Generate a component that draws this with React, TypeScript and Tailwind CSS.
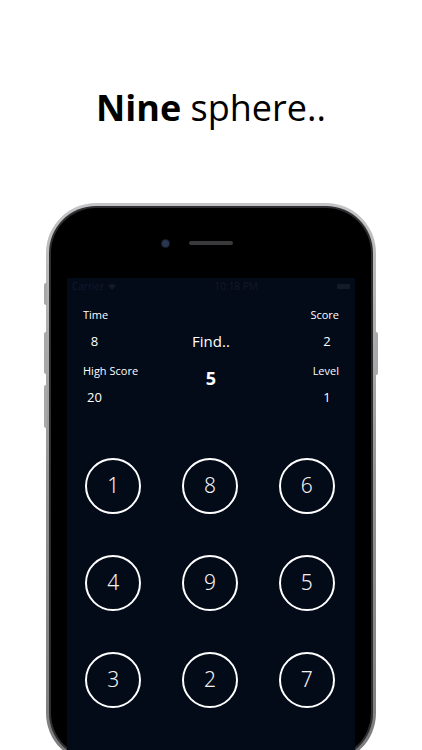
import React from "react";

const numbers = [1, 8, 6, 4, 9, 5, 3, 2, 7];

function StatusBar() {
  return (
    <div className="flex h-[16px] items-center justify-between px-[5px] text-[10px] leading-none text-[#131a29]">
      <div className="flex items-center gap-[3px]">
        <span>Carrier</span>
        <svg width="10" height="8" viewBox="0 0 10 8" fill="#131a29">
          <path d="M5 8 L1 3.5 A6 6 0 0 1 9 3.5 Z" />
        </svg>
      </div>
      <span className="ml-[18px]">10:18 PM</span>
      <div className="h-[5px] w-[13px] rounded-[1px] bg-[#131a29]" />
    </div>
  );
}

function Stats() {
  return (
    <div className="mt-[14px] grid grid-cols-[1fr_auto_1fr] px-[16px] text-white">
      <div className="flex flex-col items-start">
        <div className="text-[11px] leading-[14px]">Time</div>
        <div className="mt-[10px] w-[23px] text-center text-[13px] leading-[18px]">8</div>
        <div className="mt-[14px] text-[11px] leading-[14px]">High Score</div>
        <div className="mt-[10px] w-[23px] text-center text-[13px] leading-[18px]">20</div>
      </div>
      <div className="flex flex-col items-center pt-[23px]">
        <div className="text-[15px] leading-[20px]">Find..</div>
        <div className="mt-[16px] text-[18px] font-bold leading-[22px]">5</div>
      </div>
      <div className="flex flex-col items-end">
        <div className="text-[11px] leading-[14px]">Score</div>
        <div className="mt-[10px] w-[24px] text-center text-[13px] leading-[18px]">2</div>
        <div className="mt-[14px] text-[11px] leading-[14px]">Level</div>
        <div className="mt-[10px] w-[24px] text-center text-[13px] leading-[18px]">1</div>
      </div>
    </div>
  );
}

function Spheres() {
  return (
    <div className="mt-[52px] ml-[-2px] grid grid-cols-3 gap-y-[41px]">
      {numbers.map((n) => (
        <div key={n} className="flex justify-center">
          <div
            className="flex h-[56px] w-[56px] items-center justify-center rounded-full border-2 border-white text-[21px] font-light text-[#f2f2f2]"
            style={{ fontFamily: '"Noto Sans", sans-serif' }}
          >
            {n}
          </div>
        </div>
      ))}
    </div>
  );
}

function Phone() {
  return (
    <div className="relative mx-auto mt-[71px] w-[330px]">
      {/* hardware buttons */}
      <div className="absolute left-[-2px] top-[80px] h-[22px] w-[3px] rounded-l-[2px] bg-[#a8a8aa]" />
      <div className="absolute left-[-2px] top-[129px] h-[42px] w-[3px] rounded-l-[2px] bg-[#a8a8aa]" />
      <div className="absolute left-[-2px] top-[182px] h-[43px] w-[3px] rounded-l-[2px] bg-[#a8a8aa]" />
      <div className="absolute right-[-2px] top-[129px] h-[43px] w-[3px] rounded-r-[2px] bg-[#a8a8aa]" />

      <div className="rounded-[50px] bg-gradient-to-b from-[#c4c4c6] via-[#929295] to-[#7c7c7f] p-[3px]">
        <div className="rounded-[47px] bg-[#2e2e30] p-[2px]">
          <div className="rounded-[45px] bg-black px-[16px]">
            <div className="flex h-[70px] items-center justify-center gap-[20px]">
              <div className="h-[7px] w-[7px] rounded-full bg-[#2b3550] ring-1 ring-[#161a24]" />
              <div className="h-[4px] w-[44px] rounded-full bg-[#3a3a3c]" />
              <div className="w-[7px]" />
            </div>
            <div className="h-[480px] bg-[#030a18]">
              <StatusBar />
              <Stats />
              <Spheres />
            </div>
          </div>
        </div>
      </div>
    </div>
  );
}

export default function App() {
  return (
    <div
      className="h-[750px] w-[422px] overflow-hidden bg-white"
      style={{ fontFamily: '"Open Sans", "Noto Sans", sans-serif' }}
    >
      <h1 className="pt-[84px] text-center text-[36px] leading-[48px] text-black">
        <span className="font-bold">Nine</span> sphere..
      </h1>
      <Phone />
    </div>
  );
}
